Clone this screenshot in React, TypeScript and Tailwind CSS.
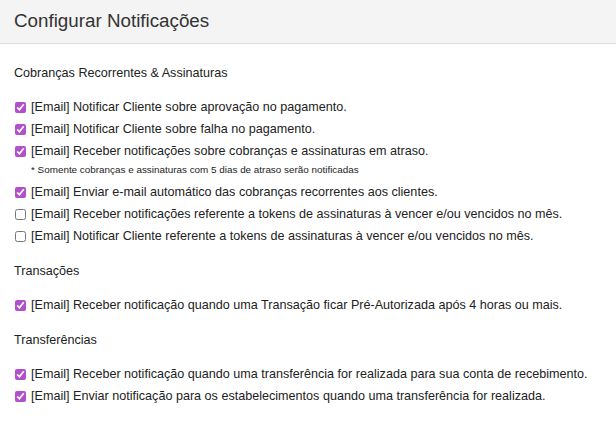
import React from "react";

type Item = { label: string; checked: boolean; note?: string };

const sections: { title: string; items: Item[] }[] = [
  {
    title: "Cobranças Recorrentes & Assinaturas",
    items: [
      { label: "[Email] Notificar Cliente sobre aprovação no pagamento.", checked: true },
      { label: "[Email] Notificar Cliente sobre falha no pagamento.", checked: true },
      {
        label: "[Email] Receber notificações sobre cobranças e assinaturas em atraso.",
        checked: true,
        note: "* Somente cobranças e assinaturas com 5 dias de atraso serão notificadas",
      },
      { label: "[Email] Enviar e-mail automático das cobranças recorrentes aos clientes.", checked: true },
      { label: "[Email] Receber notificações referente a tokens de assinaturas à vencer e/ou vencidos no mês.", checked: false },
      { label: "[Email] Notificar Cliente referente a tokens de assinaturas à vencer e/ou vencidos no mês.", checked: false },
    ],
  },
  {
    title: "Transações",
    items: [
      { label: "[Email] Receber notificação quando uma Transação ficar Pré-Autorizada após 4 horas ou mais.", checked: true },
    ],
  },
  {
    title: "Transferências",
    items: [
      { label: "[Email] Receber notificação quando uma transferência for realizada para sua conta de recebimento.", checked: true },
      { label: "[Email] Enviar notificação para os estabelecimentos quando uma transferência for realizada.", checked: true },
    ],
  },
];

function Row({ item }: { item: Item }) {
  return (
    <div>
      <label className="flex items-center h-[22px] text-[12.6px] text-[#222] whitespace-nowrap">
        <input
          type="checkbox"
          defaultChecked={item.checked}
          className="w-[11px] h-[11px] m-0 ml-[1px] accent-[#b24fcd]"
        />
        <span className="ml-[5px]">{item.label}</span>
      </label>
      {item.note && (
        <div className="pl-[17px] mb-[3px] text-[9.9px] leading-[16px] text-[#222]">{item.note}</div>
      )}
    </div>
  );
}

export default function App() {
  return (
    <div className="w-[616px] h-[428px] bg-white font-['Liberation_Sans',Arial,sans-serif]">
      <div className="h-[44px] bg-[#f4f4f4] border-b border-[#dddddd] px-[14px] flex items-center">
        <h1 className="text-[18.8px] text-[#333] leading-none">Configurar Notificações</h1>
      </div>
      <div className="px-[14px] pt-[19px]">
        {sections.map((s, i) => (
          <div key={s.title} className={i > 0 ? "mt-[14px]" : ""}>
            <div className="text-[12.6px] leading-[20px] text-[#222] mb-[13px]">{s.title}</div>
            {s.items.map((it) => (
              <Row key={it.label} item={it} />
            ))}
          </div>
        ))}
      </div>
    </div>
  );
}
